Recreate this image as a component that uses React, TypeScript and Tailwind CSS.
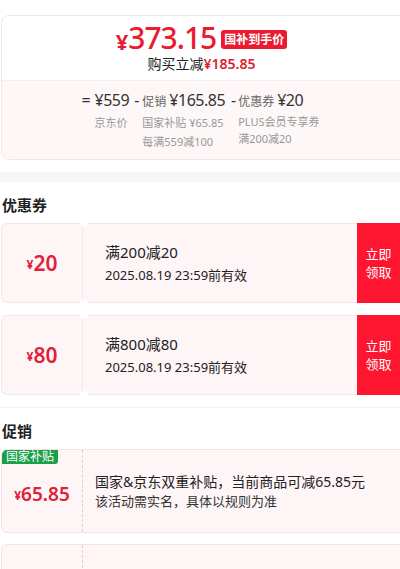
import React from 'react'

const coupons = [
  { amount: '20', title: '满200减20', date: '2025.08.19 23:59前有效' },
  { amount: '80', title: '满800减80', date: '2025.08.19 23:59前有效' },
]

function Coupon({ amount, title, date }: { amount: string; title: string; date: string }) {
  return (
    <div className='relative flex h-[80px]'>
      <div className='flex w-[82px] items-center justify-center rounded-l-md border border-[#f6e6e8] bg-[#fdf5f6] text-[#e3203a]'>
        <span className='text-[12px] font-bold mt-[4px]'>¥</span>
        <span className='text-[21px] font-semibold leading-none'>{amount}</span>
      </div>
      <div className='flex flex-1 flex-col justify-center border-y border-[#f6e6e8] bg-[#fdf5f6] pl-[22px] text-[#222]'>
        <div className='text-[15px] leading-[22px]'>{title}</div>
        <div className='text-[13px] leading-[20px] mt-[2px]'>{date}</div>
      </div>
      <div className='flex w-[43px] items-center justify-center bg-[#fe1530] text-center text-[13px] leading-[18px] text-white'>
        立即<br />领取
      </div>
      <div className='absolute left-[79px] top-[-4px] h-[8px] w-[8px] rounded-full bg-white' />
      <div className='absolute left-[79px] bottom-[-4px] h-[8px] w-[8px] rounded-full bg-white' />
    </div>
  )
}

export default function App() {
  return (
    <div className='w-[400px] overflow-hidden bg-white' style={{ fontFamily: '"Noto Sans", "Noto Sans CJK SC", sans-serif' }}>
      <div className='pt-[15px]'>
        <div className='ml-px -mr-3 overflow-hidden rounded-l-lg border border-[#f7e4e7]'>
          <div className='flex flex-col items-center pt-[6px] pb-[6px] pr-[10px]'>
            <div className='flex items-center'>
              <span className='text-[22px] font-bold leading-none text-[#ea1b2f] mt-[5px]'>¥</span>
              <span className='text-[30px] font-medium leading-[32px] tracking-[-1px] text-[#ea1b2f]'>373.15</span>
              <span className='ml-[5px] rounded-[3px] bg-[#ea1b2f] px-[3px] text-[12px] font-bold leading-[19px] text-white mt-[3px]'>国补到手价</span>
            </div>
            <div className='text-[14px] leading-[20px] text-[#222]'>
              购买立减<span className='font-semibold text-[#d81e2e]'>¥185.85</span>
            </div>
          </div>
          <div className='flex justify-center border-t border-[#f7ecee] bg-[#fdf7f7] pt-[8px] pb-[8px] pr-[12px] text-[#999]'>
            <span className='mr-[4px] text-[16px] leading-[22px] text-[#333]'>=</span>
            <div>
              <div className='text-[16px] leading-[22px] tracking-[-0.5px] text-[#333]'>¥559</div>
              <div className='text-[11px] leading-[20px] mt-[2px]'>京东价</div>
            </div>
            <span className='ml-[5px] mr-[3px] text-[16px] leading-[22px] text-[#333]'>-</span>
            <div>
              <div className='leading-[22px] text-[#333]'>
                <span className='text-[12px] text-[#666]'>促销</span>
                <span className='ml-[3px] text-[16px] tracking-[-0.5px]'>¥165.85</span>
              </div>
              <div className='text-[11px] leading-[19px]'>国家补贴 ¥65.85</div>
              <div className='text-[11px] leading-[19px]'>每满559减100</div>
            </div>
            <span className='ml-[6px] mr-[2px] text-[16px] leading-[22px] text-[#333]'>-</span>
            <div>
              <div className='leading-[22px] text-[#333]'>
                <span className='text-[12px] text-[#666]'>优惠券</span>
                <span className='ml-[3px] text-[16px] tracking-[-0.5px]'>¥20</span>
              </div>
              <div className='text-[11px] leading-[17px]'>PLUS会员专享券</div>
              <div className='text-[11px] leading-[17px]'>满200减20</div>
            </div>
          </div>
        </div>
      </div>

      <div className='mt-[12px] h-[10px] bg-[#f6f6f9]' />

      <div className='px-[2px] pt-[12px] text-[15px] font-bold leading-[22px] text-[#222]'>优惠券</div>
      <div className='mt-[7px] flex flex-col gap-[12px] pl-px'>
        {coupons.map((c) => (
          <Coupon key={c.amount} {...c} />
        ))}
      </div>

      <div className='mt-[12px] border-t border-[#f2f2f2]' />

      <div className='px-[2px] pt-[12px] text-[15px] font-bold leading-[22px] text-[#222]'>促销</div>
      <div className='mt-[7px] flex flex-col gap-[11px] pl-px'>
        <div className='relative -mr-3 flex h-[84px] overflow-hidden rounded-l-md border border-[#f6e2e5] bg-[#fdf5f6]'>
          <div className='absolute left-0 top-0 rounded-br-[3px] bg-[#1ba04a] px-[4px] text-[12px] leading-[14px] text-white'>国家补贴</div>
          <div className='flex w-[81px] items-center justify-center border-r border-dashed border-[#e6ccd0] pt-[6px] text-[#e3203a]'>
            <span className='text-[12px] font-bold mt-[4px]'>¥</span>
            <span className='text-[19px] font-semibold leading-none'>65.85</span>
          </div>
          <div className='flex flex-col justify-center pl-[12px] text-[#222]'>
            <div className='text-[14px] leading-[20px]'>国家&amp;京东双重补贴，当前商品可减65.85元</div>
            <div className='text-[13px] leading-[19px] text-[#333]'>该活动需实名，具体以规则为准</div>
          </div>
        </div>
        <div className='relative -mr-3 flex h-[84px] overflow-hidden rounded-l-md border border-[#f6e2e5] bg-[#fdf5f6]'>
          <div className='w-[81px] border-r border-dashed border-[#e6ccd0]' />
        </div>
      </div>
    </div>
  )
}
